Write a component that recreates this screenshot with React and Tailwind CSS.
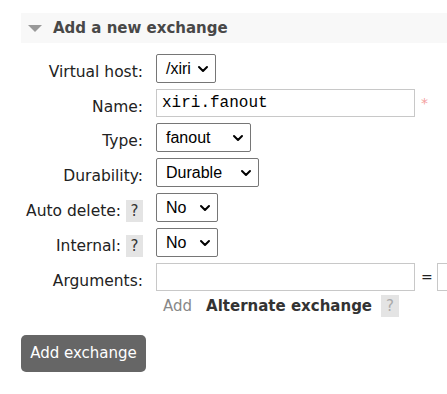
import React from "react";

const Chevron = () => (
  <svg width="12" height="12" viewBox="0 0 12 12" className="shrink-0">
    <path d="M2 4 L6 8 L10 4" fill="none" stroke="#000" strokeWidth="2" strokeLinecap="round" strokeLinejoin="round" />
  </svg>
);

const Sel = ({ value, w }) => (
  <div
    className={`flex h-[29px] shrink-0 items-center justify-between rounded-[2px] border border-[#767676] bg-white pl-[9px] pr-[6px] text-[16px] text-black ${w}`}
    style={{ fontFamily: '"Liberation Sans", Arial, sans-serif' }}
  >
    <span>{value}</span>
    <Chevron />
  </div>
);

const Q = () => (
  <span className="ml-[5px] inline-flex h-[22px] w-[17px] shrink-0 items-center justify-center bg-[#e4e4e4] text-[15px] text-[#333]">?</span>
);

const Row = ({ label, q, children }) => (
  <div className="flex items-center">
    <div className="flex w-[122px] shrink-0 items-center justify-end whitespace-nowrap pt-[7px] text-[15.5px] leading-[18px] text-[#222]">
      <span>{label}</span>
      {q && <Q />}
    </div>
    <div className="ml-[13px] flex shrink-0 items-center">{children}</div>
  </div>
);

export default function App() {
  return (
    <div
      className="h-[394px] w-[447px] overflow-hidden bg-white pt-[13px] pl-[21px]"
      style={{ fontFamily: '"DejaVu Sans", Verdana, sans-serif' }}
    >
      <div className="flex h-[30px] items-center bg-[#f8f8f8] pl-[7px]">
        <svg width="14" height="8" viewBox="0 0 14 8" className="mt-[1px]">
          <path d="M0 0 L14 0 L7 7 Z" fill="#999" />
        </svg>
        <span className="ml-[11px] whitespace-nowrap text-[15px] font-bold text-[#484848]">Add a new exchange</span>
      </div>

      <div className="mt-[11px] flex flex-col gap-[6px]">
        <Row label="Virtual host:">
          <Sel value="/xiri" w="w-[60px]" />
        </Row>
        <Row label="Name:">
          <div
            className="flex h-[28px] w-[259px] items-center border border-[#c8c8c8] pl-[5px] text-[16px] text-black"
            style={{ fontFamily: '"Liberation Mono", "Courier New", monospace' }}
          >
            xiri.fanout
          </div>
          <span className="ml-[6px] text-[14px] text-[#f4a0a0]">*</span>
        </Row>
        <Row label="Type:">
          <Sel value="fanout" w="w-[95px]" />
        </Row>
        <Row label="Durability:">
          <Sel value="Durable" w="w-[103px]" />
        </Row>
        <Row label="Auto delete:" q>
          <Sel value="No" w="w-[62px]" />
        </Row>
        <Row label="Internal:" q>
          <Sel value="No" w="w-[62px]" />
        </Row>
        <Row label="Arguments:">
          <div className="h-[28px] w-[259px] shrink-0 border border-[#c8c8c8]" />
          <span className="ml-[6px] text-[14px] text-[#222]">=</span>
          <div className="ml-[4px] h-[28px] w-[40px] shrink-0 border border-[#c8c8c8]" />
        </Row>
      </div>

      <div className="mt-[4px] flex items-center pl-[142px]">
        <span className="text-[15px] text-[#888]">Add</span>
        <span className="ml-[14px] whitespace-nowrap text-[15px] font-bold text-[#333]">Alternate exchange</span>
        <span className="ml-[9px] inline-flex h-[22px] w-[18px] items-center justify-center bg-[#e4e4e4] text-[15px] text-[#aaa]">?</span>
      </div>

      <button className="mt-[17px] flex h-[37px] w-[125px] items-center justify-center rounded-[5px] bg-[#666] text-[15px] text-white">
        Add exchange
      </button>
    </div>
  );
}
